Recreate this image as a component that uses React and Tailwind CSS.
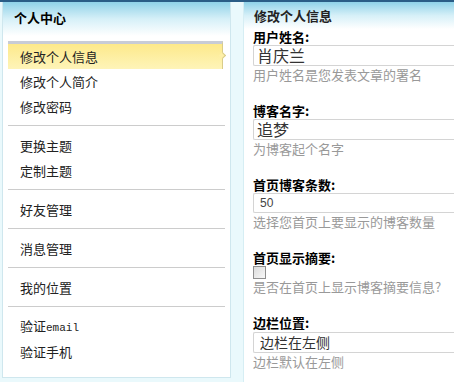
const menuGroups = [
  ['修改个人信息', '修改个人简介', '修改密码'],
  ['更换主题', '定制主题'],
  ['好友管理'],
  ['消息管理'],
  ['我的位置'],
  ['验证email', '验证手机'],
];

const Field = ({ label, children, hint, last }) => (
  <div className={last ? '' : 'mb-[19px]'}>
    <div className="font-bold text-[13px] leading-[16px] h-[16px] text-black">{label}</div>
    {children}
    <div className="text-[13px] leading-[18px] h-[18px] text-[#999]">{hint}</div>
  </div>
);

const MenuLabel = ({ text }) => {
  if (text === '验证email') {
    return (
      <span>
        验证<span className="text-[11px]" style={{ fontFamily: '"Liberation Mono", monospace' }}>email</span>
      </span>
    );
  }
  return <span>{text}</span>;
};

const App = () => {
  return (
    <div
      className="w-[454px] h-[382px] overflow-hidden bg-[#eaf9fc] flex flex-col"
      style={{ fontFamily: '"Noto Sans CJK SC", "Noto Sans", sans-serif' }}
    >
      <div className="h-[2px] bg-[#2a5d86] shrink-0" />
      <div className="flex flex-1 min-h-0">
        {/* Left sidebar */}
        <div className="w-[231px] shrink-0 pl-[2px] pb-[4px]">
          <div className="h-full border border-[#cfe7ee] border-t-0 bg-white flex flex-col">
            <div className="h-[34px] bg-gradient-to-b from-[#8fd2e8] via-[#d6f0f8] to-white pl-[11px] pt-[6px] text-[13px] leading-[20px] font-bold text-black">
              个人中心
            </div>
            <div className="px-[5px] pt-[5px]">
              {menuGroups.map((group, gi) => (
                <div key={gi} className={gi > 0 ? 'border-t border-[#cccccc] pt-[7px] pb-[6px]' : 'pb-[6px]'}>
                  {group.map((item, ii) => {
                    const active = gi === 0 && ii === 0;
                    return (
                      <div
                        key={item}
                        className={
                          active
                            ? 'relative h-[28px] mr-[2px] pl-[12px] flex items-center text-[13px] leading-[18px] text-[#222] bg-gradient-to-b from-[#fde98a] to-[#fef4b8] border-t-[3px] border-[#c8ccd6] border-r border-r-[#d9cc8a]'
                            : 'h-[25px] pl-[12px] flex items-center text-[13px] leading-[18px] text-[#222]'
                        }
                      >
                        <MenuLabel text={item} />
                        {active && (
                          <span className="absolute -right-[3px] top-[9px] w-[5px] h-[5px] bg-[#fef0a8] border-t border-r border-[#d9cc8a] rotate-45" />
                        )}
                      </div>
                    );
                  })}
                </div>
              ))}
            </div>
          </div>
        </div>

        {/* Right content */}
        <div className="flex-1 ml-[12px] border-l border-[#d6eef4] bg-white flex flex-col">
          <div className="h-[27px] shrink-0 bg-gradient-to-b from-[#8fd2e8] via-[#d6f0f8] to-white pl-[10px] pt-[5px] text-[13px] leading-[18px] font-bold text-[#222]">
            修改个人信息
          </div>
          <div className="pl-[9px]">
            <Field label="用户姓名:" hint="用户姓名是您发表文章的署名">
              <div className="h-[21px] flex items-center border border-[#d4d4d4] border-r-0 rounded-l-[2px] pl-[3px] text-[16px] leading-[17px] text-[#333]">
                肖庆兰
              </div>
            </Field>
            <Field label="博客名字:" hint="为博客起个名字">
              <div className="h-[21px] flex items-center border border-[#d4d4d4] border-r-0 rounded-l-[2px] pl-[3px] text-[16px] leading-[17px] text-[#333]">
                追梦
              </div>
            </Field>
            <Field label="首页博客条数:" hint="选择您首页上要显示的博客数量">
              <div
                className="h-[20px] border border-[#d4d4d4] border-r-0 rounded-l-[2px] pl-[6px] text-[12px] leading-[18px] text-[#444]"
                style={{ fontFamily: 'Arial, "Liberation Sans", sans-serif' }}
              >
                50
              </div>
            </Field>
            <Field label="首页显示摘要:" hint="是否在首页上显示博客摘要信息?">
              <div className="h-[12px]">
                <div className="w-[13px] h-[13px] border border-[#8f8f8f] bg-gradient-to-br from-[#dcdcdc] to-[#f8f8f8]" />
              </div>
            </Field>
            <Field label="边栏位置:" hint="边栏默认在左侧" last>
              <div className="h-[21px] mt-[1px] flex items-center border border-[#d4d4d4] border-r-0 rounded-l-[2px] pl-[6px] text-[14px] leading-[17px] text-[#333]">
                边栏在左侧
              </div>
            </Field>
          </div>
        </div>
      </div>
    </div>
  );
};

export default App;
